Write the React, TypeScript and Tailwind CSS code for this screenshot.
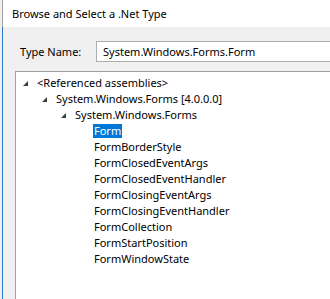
import React from "react";

const font = { fontFamily: '"Noto Sans", "Open Sans", sans-serif' };

function Arrow() {
  return (
    <svg width="5" height="5" viewBox="0 0 5 5" className="shrink-0">
      <polygon points="5,0 5,5 0,5" fill="#3c3c3c" />
    </svg>
  );
}

const items = [
  "FormBorderStyle",
  "FormClosedEventArgs",
  "FormClosedEventHandler",
  "FormClosingEventArgs",
  "FormClosingEventHandler",
  "FormCollection",
  "FormStartPosition",
  "FormWindowState",
];

export default function App() {
  return (
    <div
      className="w-[330px] h-[299px] overflow-hidden flex bg-[#f0f0f0] text-black text-[11px] leading-[16px]"
      style={font}
    >
      <div className="w-[3px] shrink-0 flex flex-col">
        <div className="h-[27px] flex">
          <div className="w-[2px]" />
          <div className="w-px bg-[#a0a0a0]" />
        </div>
        <div className="flex-1 flex">
          <div className="w-[2px]" />
          <div className="w-px bg-[#2b79c9]" />
        </div>
      </div>
      <div className="flex-1 min-w-0 flex flex-col">
        <div className="h-[27px] bg-white flex items-center pl-[9px] text-[11px] whitespace-nowrap shrink-0">
          Browse and Select a .Net Type
        </div>
        <div className="flex items-center mt-[14px] h-[21px] shrink-0 whitespace-nowrap">
          <div className="w-[93px] pl-[17px] shrink-0">Type Name:</div>
          <div className="w-[400px] shrink-0 h-[21px] bg-white border border-[#adadad] flex items-center pl-[6px]">
            System.Windows.Forms.Form
          </div>
        </div>
        <div className="ml-[12px] mt-[9px] w-[400px] flex-1 bg-white border-l border-t border-[#a0a0a0] pt-[3px] flex flex-col whitespace-nowrap">
          <div className="flex items-center h-[16px] pl-[7px] gap-[9px]">
            <Arrow />
            <span>&lt;Referenced assemblies&gt;</span>
          </div>
          <div className="flex items-center h-[16px] pl-[26px] gap-[9px]">
            <Arrow />
            <span>System.Windows.Forms [4.0.0.0]</span>
          </div>
          <div className="flex items-center h-[16px] pl-[45px] gap-[9px]">
            <Arrow />
            <span>System.Windows.Forms</span>
          </div>
          <div className="flex items-center h-[16px] pl-[77px]">
            <span className="bg-[#0078d7] text-white px-[1px] h-[14px] leading-[14px]">Form</span>
          </div>
          {items.map((t) => (
            <div key={t} className="flex items-center h-[16px] pl-[78px]">
              <span>{t}</span>
            </div>
          ))}
        </div>
      </div>
    </div>
  );
}
